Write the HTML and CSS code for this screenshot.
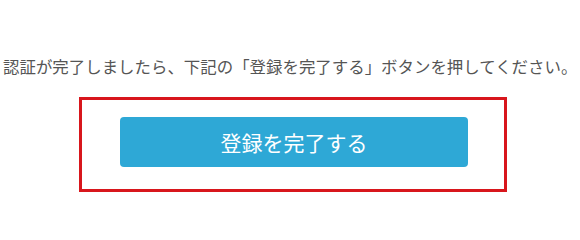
FILE: index.html
```html
<!DOCTYPE html>
<html lang="ja">
<head>
<meta charset="utf-8">
<link rel="stylesheet" href="styles.css">
</head>
<body>
<div class="page">
  <p class="notice">認証が完了しましたら、下記の「登録を完了する」ボタンを押してください。</p>
  <div class="highlight">
    <button class="complete">登録を完了する</button>
  </div>
</div>
</body>
</html>
```
FILE: styles.css
```css
html, body {
  margin: 0;
  padding: 0;
  background: #ffffff;
}
.page {
  width: 580px;
  height: 239px;
  overflow: hidden;
  font-family: "Noto Sans CJK JP", "Noto Sans", sans-serif;
}
.notice {
  margin: 54px 0 0;
  padding-left: 3px;
  font-size: 16.45px;
  line-height: 24px;
  color: #555555;
  text-align: left;
  white-space: nowrap;
}
.highlight {
  box-sizing: border-box;
  width: 428px;
  height: 95px;
  margin: 19px 0 0 79px;
  border: 3px solid #d8161c;
  display: flex;
  padding: 17px 0 0 38px;
}
.complete {
  width: 348px;
  height: 50px;
  border: none;
  border-radius: 4px;
  background: #2ea8d6;
  color: #ffffff;
  font-family: "Noto Sans CJK JP", "Noto Sans", sans-serif;
  font-size: 21px;
  padding: 0;
}
```
